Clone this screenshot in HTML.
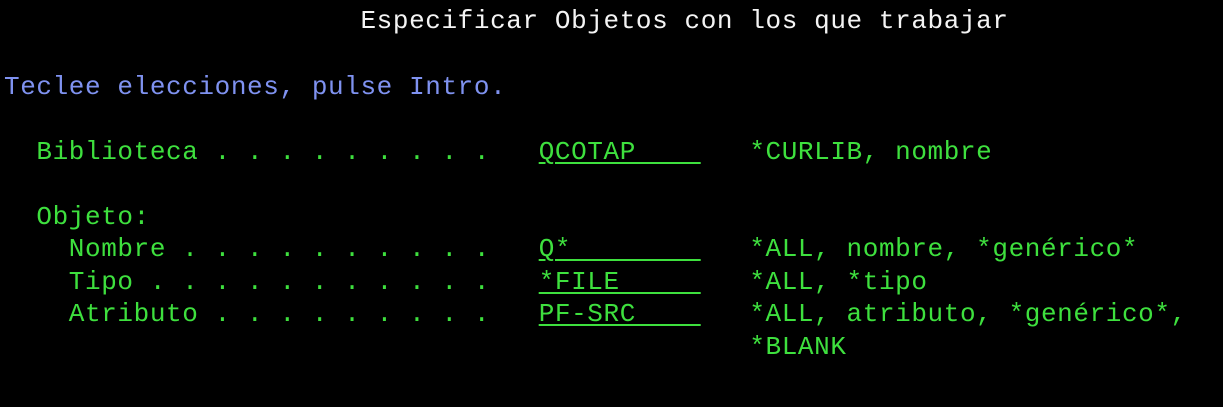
<!DOCTYPE html>
<html><head><meta charset="utf-8"><style>
html,body{margin:0;padding:0;background:#000;width:1223px;height:407px;overflow:hidden}
.l{position:absolute;left:4px;white-space:pre;font-family:"Liberation Mono","DejaVu Sans Mono",monospace;font-size:26px;letter-spacing:0.6px;line-height:32px;color:#3ee03e}
.w{color:#f4f4f4}.b{color:#7f92f0}
.u{text-decoration:underline;text-underline-offset:3px;text-decoration-thickness:2px}
</style></head><body>
<div class="l w" style="top:5px">                      Especificar Objetos con los que trabajar</div>
<div class="l b" style="top:71px">Teclee elecciones, pulse Intro.</div>
<div class="l" style="top:136px">  Biblioteca . . . . . . . . .   <span class="u">QCOTAP    </span>   *CURLIB, nombre</div>
<div class="l" style="top:201px">  Objeto:</div>
<div class="l" style="top:233px">    Nombre . . . . . . . . . .   <span class="u">Q*        </span>   *ALL, nombre, *genérico*</div>
<div class="l" style="top:266px">    Tipo . . . . . . . . . . .   <span class="u">*FILE     </span>   *ALL, *tipo</div>
<div class="l" style="top:298px">    Atributo . . . . . . . . .   <span class="u">PF-SRC    </span>   *ALL, atributo, *genérico*,</div>
<div class="l" style="top:331px">                                              *BLANK</div>
</body></html>
